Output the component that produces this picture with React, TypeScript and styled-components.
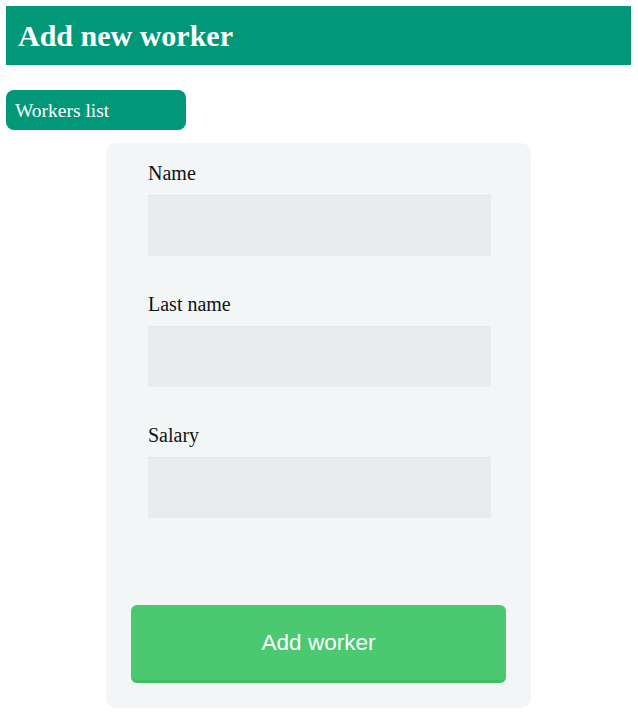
import React from "react";
import styled, { createGlobalStyle } from "styled-components";

const GlobalStyle = createGlobalStyle`
  html, body { margin: 0; padding: 0; background: #ffffff; }
  body { padding: 6px 7px 6px 6px; font-family: "Liberation Serif", "Times New Roman", serif; }
  * { box-sizing: border-box; }
`;

const Page = styled.div`
  display: flex;
  flex-direction: column;
`;

const Header = styled.header`
  height: 59px;
  background: #009879;
  display: flex;
  align-items: center;
  padding-left: 12px;
`;

const Title = styled.h1`
  margin: 0;
  color: #ffffff;
  font-size: 30px;
  font-weight: bold;
  font-family: "Liberation Serif", "Times New Roman", serif;
`;

const NavButton = styled.button`
  margin-top: 25px;
  width: 180px;
  height: 40px;
  border: none;
  border-radius: 8px;
  background: #009879;
  color: #ffffff;
  font-family: "Liberation Serif", "Times New Roman", serif;
  font-size: 19.5px;
  text-align: left;
  padding: 2px 0 0 9px;
  cursor: pointer;
`;

const Card = styled.form`
  align-self: center;
  margin-top: 13px;
  width: 425px;
  height: 565px;
  background: #f2f6f7;
  border-radius: 10px;
  padding: 19px 25px 25px 25px;
  display: flex;
  flex-direction: column;
`;

const Fields = styled.div`
  display: flex;
  flex-direction: column;
  gap: 37px;
  padding: 0 14px 0 17px;
`;

const Field = styled.label`
  display: flex;
  flex-direction: column;
  gap: 10px;
`;

const LabelText = styled.span`
  font-size: 20px;
  line-height: 23px;
  color: #111;
`;

const Input = styled.input`
  height: 61px;
  width: 343px;
  border: none;
  border-top: 1px solid #e0e5e8;
  background: #e8ecef;
  outline: none;
  font-size: 18px;
  padding: 0 10px;
`;

const Submit = styled.button`
  margin-top: auto;
  height: 78px;
  width: 375px;
  border: none;
  border-bottom: 3px solid #3fbf63;
  border-radius: 6px;
  background: #4bc971;
  color: #ffffff;
  font-family: "Liberation Sans", Arial, sans-serif;
  font-size: 22.5px;
  cursor: pointer;
`;

export default function App() {
  return (
    <>
      <GlobalStyle />
      <Page>
        <Header>
          <Title>Add new worker</Title>
        </Header>
        <div>
          <NavButton type="button">Workers list</NavButton>
        </div>
        <Card onSubmit={(e) => e.preventDefault()}>
          <Fields>
            <Field>
              <LabelText>Name</LabelText>
              <Input type="text" />
            </Field>
            <Field>
              <LabelText>Last name</LabelText>
              <Input type="text" />
            </Field>
            <Field>
              <LabelText>Salary</LabelText>
              <Input type="text" />
            </Field>
          </Fields>
          <Submit type="submit">Add worker</Submit>
        </Card>
      </Page>
    </>
  );
}
